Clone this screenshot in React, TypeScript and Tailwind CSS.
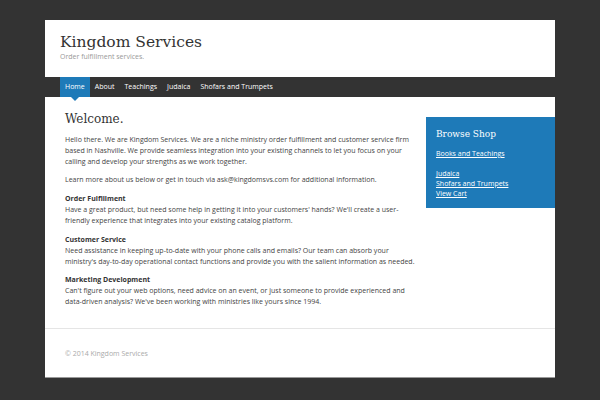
import React from "react";

export default function App() {
  const sans = { fontFamily: '"Open Sans", "DejaVu Sans", sans-serif' };
  const serif = { fontFamily: '"DejaVu Serif", serif' };
  return (
    <div className="w-[600px] h-[400px] bg-[#333333] pt-[20px] overflow-hidden" style={sans}>
      <div className="mx-[45px] w-[510px] bg-white border-b border-[#999]">
        <header className="h-[57px] pl-[15px] pt-[12px]">
          <h1 className="text-[15.5px] leading-[21px] text-[#333]" style={serif}>
            Kingdom Services
          </h1>
          <p className="text-[7px] leading-[8px] text-[#999]">Order fulfillment services.</p>
        </header>
        <nav className="h-[20px] bg-[#333333] pl-[15px] flex text-[7px] text-white">
          <a className="relative px-[5px] bg-[#1e7ab8] flex items-center">
            Home
            <span className="absolute left-1/2 -translate-x-1/2 top-full w-0 h-0 border-l-[4px] border-r-[4px] border-t-[4px] border-l-transparent border-r-transparent border-t-[#1e7ab8]" />
          </a>
          <a className="px-[5px] flex items-center">About</a>
          <a className="px-[5px] flex items-center">Teachings</a>
          <a className="px-[5px] flex items-center">Judaica</a>
          <a className="px-[5px] flex items-center">Shofars and Trumpets</a>
        </nav>
        <div className="flex pt-[15px]">
          <main className="pl-[20px] w-[375px] text-[7px] leading-[11px] text-[#444]">
            <h2 className="text-[12px] leading-[14px] text-[#333] mb-[8px]" style={serif}>
              Welcome.
            </h2>
            <p className="mb-[7px]">
              Hello there. We are Kingdom Services. We are a niche ministry order fulfillment and customer service firm based in Nashville. We provide seamless integration into your existing channels to let you focus on your calling and develop your strengths as we work together.
            </p>
            <p className="mb-[8px]">
              Learn more about us below or get in touch via ask@kingdomsvs.com for additional information.
            </p>
            <p className="mb-[8px]">
              <b className="text-[#333]">Order Fulfillment</b>
              <br />
              Have a great product, but need some help in getting it into your customers' hands? We'll create a user-friendly experience that integrates into your existing catalog platform.
            </p>
            <p className="mb-[7px]">
              <b className="text-[#333]">Customer Service</b>
              <br />
              Need assistance in keeping up-to-date with your phone calls and emails? Our team can absorb your ministry's day-to-day operational contact functions and provide you with the salient information as needed.
            </p>
            <p>
              <b className="text-[#333]">Marketing Development</b>
              <br />
              Can't figure out your web options, need advice on an event, or just someone to provide experienced and data-driven analysis? We've been working with ministries like yours since 1994.
            </p>
          </main>
          <aside className="ml-auto mt-[5px] w-[129px] h-[91px] bg-[#1e7ab8] text-white pl-[10px] pt-[11px] self-start">
            <h3 className="text-[9px] leading-[12px] mb-[9px]" style={serif}>
              Browse Shop
            </h3>
            <ul className="text-[7px] leading-[10px] underline">
              <li>Books and Teachings</li>
              <li className="h-[10px]"></li>
              <li>Judaica</li>
              <li>Shofars and Trumpets</li>
              <li>View Cart</li>
            </ul>
          </aside>
        </div>
        <footer className="mt-[21px] border-t border-[#e5e5e5] h-[49px] pl-[20px] pt-[20px] text-[7px] leading-[10px] text-[#aaa]">
          © 2014 Kingdom Services
        </footer>
      </div>
    </div>
  );
}
